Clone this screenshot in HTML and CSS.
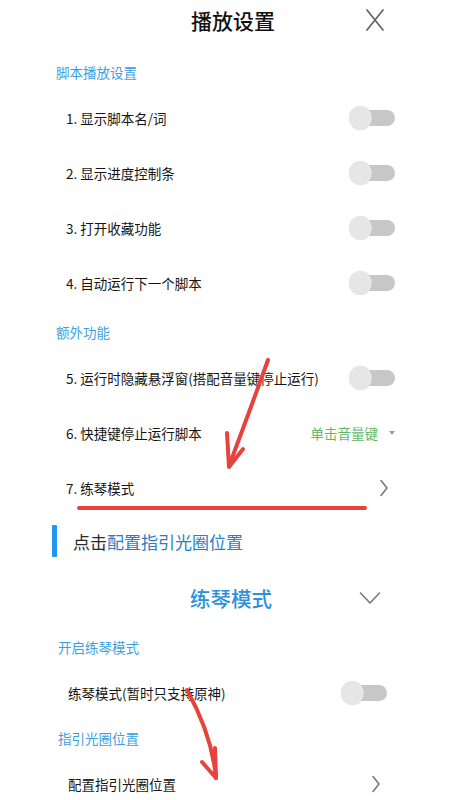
FILE: index.html
```html
<!DOCTYPE html>
<html lang="zh-CN">
<head>
<meta charset="utf-8">
<link rel="stylesheet" href="styles.css">
</head>
<body>
<div class="page">
  <div class="panel panel-a">
    <div class="header">
      <div class="title">播放设置</div>
      <svg class="close" width="20" height="24" viewBox="0 0 20 24"><path d="M2 2 L18 22 M18 2 L2 22" stroke="#666" stroke-width="1.8" fill="none" stroke-linecap="round"/></svg>
    </div>
    <div class="heading first">脚本播放设置</div>
    <div class="row"><span class="label">1. 显示脚本名/词</span><span class="toggle"><span class="track"></span><span class="knob"></span></span></div>
    <div class="row"><span class="label">2. 显示进度控制条</span><span class="toggle"><span class="track"></span><span class="knob"></span></span></div>
    <div class="row"><span class="label">3. 打开收藏功能</span><span class="toggle"><span class="track"></span><span class="knob"></span></span></div>
    <div class="row"><span class="label">4. 自动运行下一个脚本</span><span class="toggle"><span class="track"></span><span class="knob"></span></span></div>
    <div class="heading second">额外功能</div>
    <div class="row"><span class="label">5. 运行时隐藏悬浮窗(搭配音量键停止运行)</span><span class="toggle"><span class="track"></span><span class="knob"></span></span></div>
    <div class="row"><span class="label">6. 快捷键停止运行脚本</span><span class="select"><span class="select-value">单击音量键</span><span class="caret"></span></span></div>
    <div class="row"><span class="label">7. 练琴模式</span><svg class="chev" width="10" height="18" viewBox="0 0 10 18"><path d="M2 1.5 L8 9 L2 16.5" stroke="#777" stroke-width="1.6" fill="none" stroke-linecap="round" stroke-linejoin="round"/></svg></div>
  </div>

  <div class="callout"><span class="bar"></span><span class="callout-text"><span class="dark">点击</span>配置指引光圈位置</span></div>

  <div class="panel panel-b">
    <div class="subheader">
      <div class="subtitle">练琴模式</div>
      <svg class="down" width="22" height="14" viewBox="0 0 22 14"><path d="M1.5 2 L11 12 L20.5 2" stroke="#777" stroke-width="1.6" fill="none" stroke-linecap="round" stroke-linejoin="round"/></svg>
    </div>
    <div class="heading">开启练琴模式</div>
    <div class="row"><span class="label">练琴模式(暂时只支持原神)</span><span class="toggle"><span class="track"></span><span class="knob"></span></span></div>
    <div class="heading short">指引光圈位置</div>
    <div class="row"><span class="label">配置指引光圈位置</span><svg class="chev" width="10" height="18" viewBox="0 0 10 18"><path d="M2 1.5 L8 9 L2 16.5" stroke="#777" stroke-width="1.6" fill="none" stroke-linecap="round" stroke-linejoin="round"/></svg></div>
  </div>

  <svg class="marks" width="450" height="800" viewBox="0 0 450 800">
    <g stroke="#e8423c" stroke-width="4" fill="none" stroke-linecap="round" stroke-linejoin="round">
      <path d="M268 360 Q250 410 229 466"/>
      <path d="M227 433 L229 467 L243 449"/>
      <path d="M79 508 L365 508"/>
      <path d="M187 690 Q212 735 216 778"/>
      <path d="M202 762 L216 778 L215 748"/>
    </g>
  </svg>
</div>
</body>
</html>
```
FILE: styles.css
```css
* { box-sizing: border-box; }
html, body { margin: 0; padding: 0; background: #fff; }
body {
  font-family: "Noto Sans CJK SC", "Noto Sans", sans-serif;
  color: #222;
  width: 450px;
  height: 800px;
  overflow: hidden;
}
.page { position: relative; width: 450px; height: 800px; }

.panel-a { padding: 0 55px 0 56px; }
.panel-b { padding: 0 63px 0 58px; }

.header {
  height: 40px;
  display: flex;
  align-items: center;
  padding-left: 135px;
}
.title { font-size: 21px; font-weight: 500; color: #111; }
.close { margin-left: 90px; }

.heading {
  height: 36px;
  display: flex;
  align-items: center;
  font-size: 13.5px;
  color: #3d9fe2;
}
.heading.first { margin-top: 14px; }
.heading.second { margin-top: 4px; }

.row {
  height: 55px;
  display: flex;
  align-items: center;
  justify-content: space-between;
  padding-left: 10px;
  font-size: 13.5px;
  color: #151515;
}
.heading.short { height: 36px; }

.toggle { position: relative; width: 46px; height: 26px; display: flex; align-items: center; }
.track { margin-left: 12px; width: 34px; height: 16px; border-radius: 8px; background: #c7c7c7; }
.knob {
  position: absolute; left: 0; top: 1px;
  width: 23px; height: 24px; border-radius: 50%;
  background: #e6e6e6;
  box-shadow: 0 0 1px rgba(0,0,0,0.15);
}

.select { display: flex; align-items: center; }
.select-value { font-size: 13.5px; color: #62b766; }
.caret {
  margin-left: 11px;
  width: 0; height: 0;
  border-left: 3.5px solid transparent;
  border-right: 3.5px solid transparent;
  border-top: 4px solid #9a9a9a;
}
.chev { margin-right: 6px; }

.callout {
  margin-top: 10px;
  height: 32px;
  display: flex;
  align-items: center;
  padding-left: 52px;
}
.bar { width: 5px; height: 32px; background: #2196f3; border-radius: 1px; }
.callout-text { margin-left: 16px; font-size: 17px; color: #2b7dc4; }
.dark { color: #2a2a2a; }

.subheader {
  margin-top: 15px;
  height: 52px;
  display: flex;
  align-items: center;
  padding-left: 132px;
  margin-bottom: 5px;
}
.subtitle { font-size: 20.5px; font-weight: 500; color: #2f90d8; }
.down { margin-left: 87px; }

.marks { position: absolute; left: 0; top: 0; pointer-events: none; }
```
